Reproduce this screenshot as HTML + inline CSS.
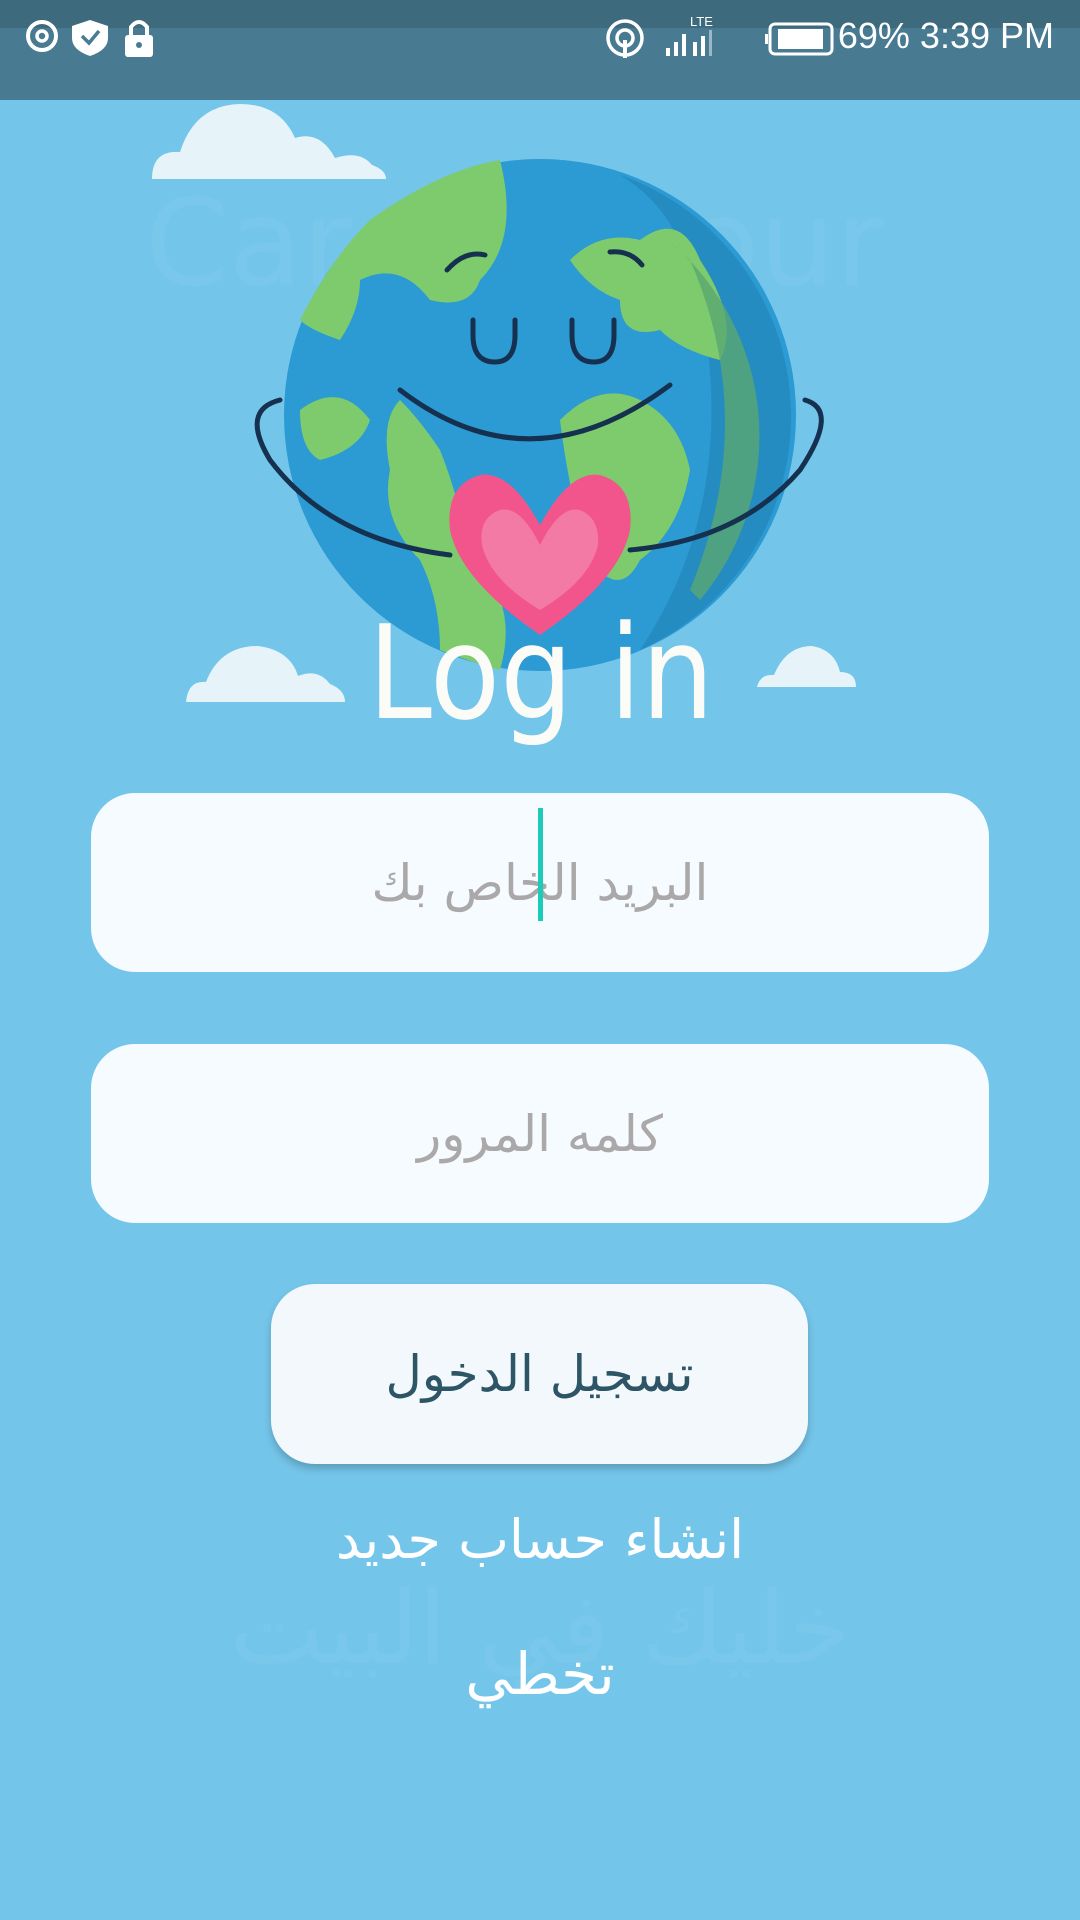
<!DOCTYPE html>
<html><head><meta charset="utf-8"><style>
html,body{margin:0;padding:0}
body{width:1080px;height:1920px;background:#74c5ea;position:relative;overflow:hidden;font-family:"Liberation Sans","DejaVu Sans",sans-serif}
.sb{position:absolute;left:0;top:0;width:1080px;height:100px;background:#487b92}
.sb .top{position:absolute;left:0;top:0;width:1080px;height:28px;background:#3e6a7e}
.st{position:absolute;right:26px;top:14px;color:#fff;font-size:36px;line-height:44px}
.field{position:absolute;left:91px;width:898px;height:179px;border-radius:44px;background:rgba(255,255,255,0.93);display:flex;align-items:center;justify-content:center;font-family:"DejaVu Sans",sans-serif;font-size:50px;color:#aaa8a8}
.btn{position:absolute;left:271px;top:1284px;width:537px;height:180px;border-radius:44px;background:rgba(248,250,251,0.96);box-shadow:0 5px 8px rgba(0,0,0,0.2);display:flex;align-items:center;justify-content:center;font-family:"DejaVu Sans",sans-serif;font-size:50px;color:#2e5566}
.link{position:absolute;left:0;width:1080px;text-align:center;color:#fff;font-family:"DejaVu Sans",sans-serif}
</style></head><body>
<div class="sb"><div class="top"></div>
<svg width="200" height="70" style="position:absolute;left:20px;top:14px" viewBox="0 0 200 70">
<circle cx="22" cy="22" r="14" fill="none" stroke="#fff" stroke-width="4"/><circle cx="22" cy="22" r="5" fill="none" stroke="#fff" stroke-width="3.5"/>
<path d="M70 6 L88 12 V24 Q88 36 70 42 Q52 36 52 24 V12 Z" fill="#fff"/><path d="M62 22 L69 29 L79 17" stroke="#487b92" stroke-width="3.5" fill="none"/>
<rect x="105" y="21" width="28" height="22" rx="3" fill="#fff"/><path d="M111 22 V13 Q119 3 127 13 V22" fill="none" stroke="#fff" stroke-width="4"/><circle cx="119" cy="31" r="3" fill="#487b92"/>
</svg>
<svg width="240" height="70" style="position:absolute;left:600px;top:14px" viewBox="0 0 240 70">
<circle cx="25" cy="24" r="17" fill="none" stroke="#fff" stroke-width="3.5"/><circle cx="25" cy="24" r="8" fill="none" stroke="#fff" stroke-width="3.5"/><rect x="23" y="26" width="4" height="18" fill="#fff"/>
<rect x="66" y="34" width="4" height="8" fill="#fff"/><rect x="74" y="28" width="4" height="14" fill="#fff"/><rect x="82" y="20" width="4" height="22" fill="#fff"/>
<text x="90" y="12" fill="#fff" font-size="13" font-family="Liberation Sans">LTE</text>
<rect x="93" y="28" width="4" height="14" fill="#fff"/><rect x="101" y="22" width="4" height="20" fill="#fff"/><rect x="109" y="16" width="3" height="26" fill="#9bb8c4"/>
<rect x="165" y="20" width="3" height="10" fill="#fff"/><rect x="170" y="10" width="62" height="30" rx="5" fill="none" stroke="#fff" stroke-width="3"/><rect x="178" y="15" width="45" height="20" fill="#fff"/>
</svg>
<div class="st">69% 3:39 PM</div>
</div>

<svg width="1080" height="800" style="position:absolute;left:0;top:100px" viewBox="0 100 1080 800">
<g fill="#e6f4f9">
<path d="M152 179 Q152 150 180 152 Q195 105 240 104 Q280 104 295 138 Q320 130 335 158 Q360 150 372 165 Q386 170 386 179 Z"/>
<path d="M186 702 Q188 680 206 682 Q220 646 258 646 Q290 650 298 676 Q318 668 330 684 Q345 690 345 702 Z"/>
<path d="M757 687 Q760 674 774 675 Q786 646 812 646 Q835 650 840 672 Q856 672 856 687 Z"/>
</g>
<text x="145" y="285" font-size="120" fill="#8fd0ee" opacity="0.2" font-family="DejaVu Sans">Care of your</text>
<circle cx="540" cy="415" r="256" fill="#2c9ad3"/>
<path d="M620 175 A256 256 0 0 1 640 650 Q740 500 700 300 Q680 210 620 175Z" fill="#2184b8" opacity="0.6"/>
<g fill="#7ecb6e">
<path d="M500 160 Q440 170 370 220 Q330 260 300 320 Q310 330 340 340 Q360 310 360 280 Q400 260 430 300 Q470 310 480 280 Q520 240 500 160Z"/>
<path d="M400 400 Q380 420 390 470 Q380 520 420 560 Q440 600 440 650 Q480 665 500 670 Q520 600 470 560 Q460 500 440 450 Q420 420 400 400Z"/>
<path d="M570 260 Q600 230 640 240 Q680 210 700 260 Q740 320 720 360 Q680 350 660 330 Q620 340 620 300 Q590 290 570 260Z"/>
<path d="M560 420 Q600 380 640 400 Q680 420 690 470 Q680 530 640 560 Q620 600 590 560 Q570 500 560 420Z"/>
<path d="M300 410 Q340 380 370 420 Q360 450 320 460 Q300 450 300 410Z"/>
</g>
<path d="M668 240 A256 256 0 0 1 700 600 L690 590 Q760 420 690 260Z" fill="#5aa870" opacity="0.8"/>
<g fill="none" stroke="#16304f" stroke-width="5" stroke-linecap="round">
<path d="M473 320 V335 Q473 362 495 362 Q515 362 515 335 V320"/>
<path d="M572 320 V335 Q572 362 594 362 Q614 362 614 335 V320"/>
<path d="M447 270 Q465 250 485 255"/><path d="M610 252 Q630 250 642 265"/>
<path d="M400 390 Q530 490 670 385"/>
<path d="M280 400 Q240 410 270 460 Q330 540 450 555"/>
<path d="M805 400 Q840 410 800 470 Q740 540 630 550"/>
</g>
<path d="M540 525 Q510 470 480 475 Q445 485 450 530 Q460 580 540 635 Q620 580 630 530 Q635 485 600 475 Q570 470 540 525Z" fill="#f2558b"/>
<path d="M540 545 Q520 505 500 510 Q478 518 482 545 Q490 580 540 610 Q590 580 598 545 Q600 518 580 510 Q560 505 540 545Z" fill="#f47aa6"/>
<text x="368" y="718" textLength="346" lengthAdjust="spacingAndGlyphs" font-size="130" fill="#fbfbf7" font-family="DejaVu Sans">Log in</text>
</svg>

<div style="position:absolute;left:0;top:1570px;width:1080px;text-align:center;font-family:'DejaVu Sans',sans-serif;font-size:100px;color:#7fc9ec;opacity:0.5">خليك في البيت</div>

<div class="field" style="top:793px">البريد الخاص بك</div>
<div style="position:absolute;left:538px;top:808px;width:5px;height:113px;background:#1ccbb8"></div>
<div class="field" style="top:1044px">كلمه المرور</div>
<div class="btn">تسجيل الدخول</div>
<div class="link" style="top:1508px;font-size:54px">انشاء حساب جديد</div>
<div class="link" style="top:1640px;font-size:58px">تخطي</div>
</body></html>
